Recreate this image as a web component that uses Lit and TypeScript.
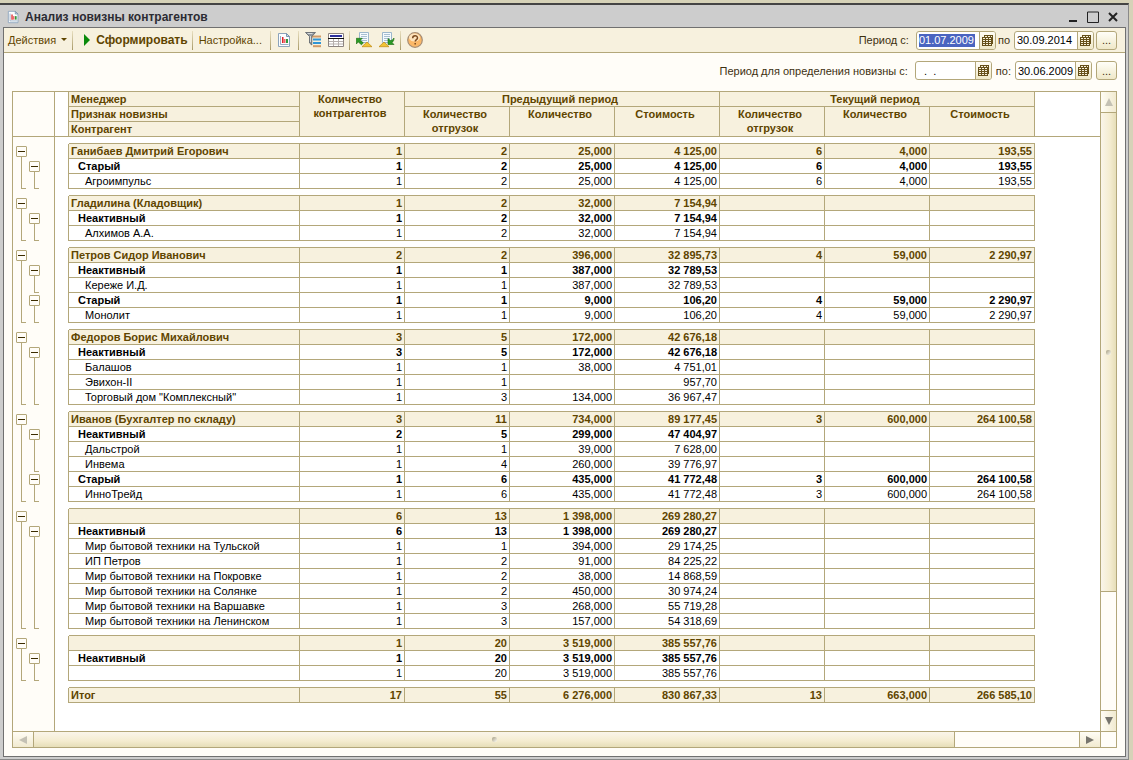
import { LitElement, html, css, svg, nothing } from "lit";
import { customElement, property } from "lit/decorators.js";

type Level = 0 | 1 | 2;
interface Row { level: Level; name: string; values: string[]; }

const r = (level: Level, name: string, line: string): Row => ({
  level, name, values: Array.from({ length: 7 }, (_, i) => line.split("|")[i] ?? ""),
});

const GROUPS: Row[][] = [
  [
    r(0, "Ганибаев Дмитрий Егорович", "1|2|25,000|4 125,00|6|4,000|193,55"),
    r(1, "Старый", "1|2|25,000|4 125,00|6|4,000|193,55"),
    r(2, "Агроимпульс", "1|2|25,000|4 125,00|6|4,000|193,55"),
  ],
  [
    r(0, "Гладилина (Кладовщик)", "1|2|32,000|7 154,94"),
    r(1, "Неактивный", "1|2|32,000|7 154,94"),
    r(2, "Алхимов А.А.", "1|2|32,000|7 154,94"),
  ],
  [
    r(0, "Петров Сидор Иванович", "2|2|396,000|32 895,73|4|59,000|2 290,97"),
    r(1, "Неактивный", "1|1|387,000|32 789,53"),
    r(2, "Кереже И.Д.", "1|1|387,000|32 789,53"),
    r(1, "Старый", "1|1|9,000|106,20|4|59,000|2 290,97"),
    r(2, "Монолит", "1|1|9,000|106,20|4|59,000|2 290,97"),
  ],
  [
    r(0, "Федоров Борис Михайлович", "3|5|172,000|42 676,18"),
    r(1, "Неактивный", "3|5|172,000|42 676,18"),
    r(2, "Балашов", "1|1|38,000|4 751,01"),
    r(2, "Эвихон-II", "1|1||957,70"),
    r(2, 'Торговый дом "Комплексный"', "1|3|134,000|36 967,47"),
  ],
  [
    r(0, "Иванов (Бухгалтер по складу)", "3|11|734,000|89 177,45|3|600,000|264 100,58"),
    r(1, "Неактивный", "2|5|299,000|47 404,97"),
    r(2, "Дальстрой", "1|1|39,000|7 628,00"),
    r(2, "Инвема", "1|4|260,000|39 776,97"),
    r(1, "Старый", "1|6|435,000|41 772,48|3|600,000|264 100,58"),
    r(2, "ИнноТрейд", "1|6|435,000|41 772,48|3|600,000|264 100,58"),
  ],
  [
    r(0, "", "6|13|1 398,000|269 280,27"),
    r(1, "Неактивный", "6|13|1 398,000|269 280,27"),
    r(2, "Мир бытовой техники на Тульской", "1|1|394,000|29 174,25"),
    r(2, "ИП Петров", "1|2|91,000|84 225,22"),
    r(2, "Мир бытовой техники на Покровке", "1|2|38,000|14 868,59"),
    r(2, "Мир бытовой техники на Солянке", "1|2|450,000|30 974,24"),
    r(2, "Мир бытовой техники на Варшавке", "1|3|268,000|55 719,28"),
    r(2, "Мир бытовой техники на Ленинском", "1|3|157,000|54 318,69"),
  ],
  [
    r(0, "", "1|20|3 519,000|385 557,76"),
    r(1, "Неактивный", "1|20|3 519,000|385 557,76"),
    r(2, "", "1|20|3 519,000|385 557,76"),
  ],
  [r(0, "Итог", "17|55|6 276,000|830 867,33|13|663,000|266 585,10")],
];

const chart = svg`
  <path d="M1.500 1.500h8l3 3v10h-11z" fill="#fbfdff" stroke="#8ba3bb"/>
  <path d="M9.500 1.500v3h3z" fill="#cfdeec" stroke="#7b93ae"/>
  <path d="M3.500 4v8.500h8" fill="none" stroke="#9aaec4"/>
  <path d="M5 5h1.500v6H5z" fill="#e0252b"/><path d="M6.500 7h2v4h-2z" fill="#f0686c"/>
  <path d="M9 7h2v4H9z" fill="#2f9a3c"/>`;
const page = svg`
  <path d="M3.500 .5h9v10h-9z" fill="#f5fafd" stroke="#9db7cc"/>
  <path d="M5 2.500h6M5 4.500h6M5 6.500h6M5 8.500h6" stroke="#a9bfd2"/>`;

const ICONS: Record<string, unknown> = {
  chart,
  filter: svg`
    <path d="M7 4.500h9" stroke="#d09a68" stroke-width="2"/>
    <path d="M8 7.500h8M8 11h8" stroke="#2f95d6" stroke-width="2"/>
    <path d="M8 14.200h8" stroke="#d09a68" stroke-width="2"/>
    <path d="M.5 .5h10L6.800 4.500v8.500L4.500 11V4.500z" fill="#8e959b" stroke="#5a6168" stroke-width=".8"/>
    <path d="M2.500 1.500h5M5.500 4v6" stroke="#d6dadd"/>`,
  grid: svg`
    <path d="M.5 1.500h15v13H.5z" fill="#fff" stroke="#8c8480"/>
    <path d="M2 3h12v2H2z" fill="#2a2f9c"/>
    <path d="M0 6.500h16" stroke="#111"/>
    <path d="M1 9.500h14M1 12h14M5.500 7v7M10.500 7v7" stroke="#b5afad"/>`,
  restore: svg`${page}
    <path d="M6 14.700l5-4.700 5 4.700z" fill="#f2c335" stroke="#c08a12" stroke-width=".7"/>
    <path d="M.3 6.300h6l-2 2 3 2.500-1.800 2L2.300 10 .3 12z" fill="#2c9a26" stroke="#17680f" stroke-width=".6"/>`,
  save: svg`${page}
    <path d="M0 14.700l5-4.700 5 4.700z" fill="#f2c335" stroke="#c08a12" stroke-width=".7"/>
    <path d="M9 6.500v6h6l-2-2c1.500-1 2-2.500 2-4.500-.8 1.500-2 2.200-3.500 2.500z" fill="#2c9a26" stroke="#17680f" stroke-width=".6"/>`,
  help: svg`
    <circle cx="8" cy="8" r="7.300" fill="#fbb868" stroke="#a58d75" stroke-width="1.200"/>
    <ellipse cx="7.500" cy="5.500" rx="5.500" ry="4" fill="#fde3bd"/>
    <path d="M5.700 6.200c0-3.200 4.800-3.200 4.800-.3 0 1.800-2.300 1.700-2.300 3.600M8.200 11v1.600" fill="none" stroke="#7a4a20" stroke-width="1.500"/>`,
};

const icon = (name: string) =>
  html`<svg class="icon" viewBox="0 0 16 16" aria-hidden="true">${ICONS[name]}</svg>`;

const shared = css`
  * { box-sizing: border-box; }
  button { font: inherit; color: inherit; margin: 0; padding: 0; border: 0; background: none; }
  .icon { display: block; width: 16px; height: 16px; flex: none; }
`;

@customElement("date-field")
class DateField extends LitElement {
  @property() label = "";
  @property() value = "";
  @property({ type: Boolean }) selected = false;
  @property({ type: Boolean }) wide = false;

  static styles = [shared, css`
    :host { display: flex; align-items: center; }
    label { white-space: pre; padding-right: 4px; }
    .box {
      display: flex; width: 77px; height: 19px; border: 1px solid #b3a77a;
      border-radius: 3px; background: #fff; overflow: hidden;
    }
    .wide { width: 80px; }
    input {
      flex: 1; min-width: 0; height: 13px; margin: 2px 0 0 2px; padding: 0;
      border: 0; outline: 0; background: none; font: inherit; color: #000;
    }
    .marked { flex: none; width: 56px; background: #4a64c0; color: #fff; }
    button {
      display: grid; place-items: center; width: 16px; margin-left: auto;
      border-left: 1px solid #b3a77a; background: linear-gradient(#fffdf5, #efe8c8);
    }
    .pages { display: block; width: 11px; height: 11px; }
  `];

  render() {
    return html`
      <label for="date">${this.label}</label>
      <div class="box ${this.wide ? "wide" : ""}">
        <input id="date" class=${this.selected ? "marked" : ""} .value=${this.value} />
        <button aria-label="Календарь">
          <svg class="pages" viewBox="0 0 11 11" shape-rendering="crispEdges" aria-hidden="true">
            <path d="M2 0h9v9h-1v2H0V2h2z" fill="#66501a" />
            <path d="M3 1h2v1H3zM6 1h2v1H6zM9 1h1v1H9zM1 3h2v1H1zM4 3h2v1H4zM7 3h2v1H7zM1 5h2v1H1zM4 5h2v1H4zM7 5h2v1H7zM1 7h2v1H1zM4 7h2v1H4zM7 7h2v1H7zM1 9h2v1H1zM4 9h2v1H4zM7 9h2v1H7z" fill="#f7f1dc" />
          </svg>
        </button>
      </div>`;
  }
}

@customElement("outline-tree")
class OutlineTree extends LitElement {
  static styles = [shared, css`
    :host { display: flex; flex-direction: column; gap: 6px; padding: 6px 0 0 3px; }
    .group { display: flex; gap: 2px; }
    .subs { display: flex; flex-direction: column; padding-top: 15px; }
    .node {
      display: grid; grid-template-rows: 11px 1fr; width: 11px; padding-top: 3px;
      height: calc(var(--n) * 15px + 1px);
    }
    .subs .node { margin-bottom: -1px; }
    button {
      width: 11px; height: 11px; border: 1px solid #b3a77a; border-radius: 1px;
      background: #fffdf8; display: grid; place-items: center;
    }
    .minus { width: 7px; height: 1px; background: #3c2c00; }
    .stem { margin-left: 5px; width: 5px; border: solid #b3a77a; border-width: 0 0 1px 1px; }
  `];

  private node(rows: number, name: string) {
    return html`<div class="node" style="--n:${rows}">
      <button aria-label="Свернуть ${name}"><span class="minus"></span></button>
      <span class="stem"></span>
    </div>`;
  }

  render() {
    return GROUPS.filter((g) => g.length > 1).map((g) => {
      const starts = g.map((row, i) => (row.level === 1 ? i : -1)).filter((i) => i > 0);
      return html`<div class="group">
        ${this.node(g.length, g[0].name)}
        <div class="subs">
          ${starts.map((s, i) => this.node((starts[i + 1] ?? g.length) - s, g[s].name))}
        </div>
      </div>`;
    });
  }
}

@customElement("report-table")
class ReportTable extends LitElement {
  static styles = [shared, css`
    :host { display: block; }
    table { width: 100%; table-layout: fixed; border-collapse: separate; border-spacing: 0; }
    .edge { width: 14px; }
    .name { width: 231px; }
    .num { width: 105px; }
    th, td {
      height: 15px; padding: 0 2px; line-height: 14px; font-weight: 400;
      border: solid #b3a77a; border-width: 0 1px 1px 0; white-space: nowrap; overflow: hidden;
      vertical-align: top; color: #000;
    }
    th { text-align: left; }
    td { text-align: right; }
    thead th {
      background: #f7f1de; color: #5f4500; font-weight: 700; text-align: center;
      white-space: normal; padding-right: 6px;
    }
    thead .left { text-align: left; }
    thead .blank { background: #fff; padding: 0; border-right-width: 0; }
    thead .first, tbody .first { border-right-width: 1px; }
    tbody .side { border-bottom-width: 0; background: #fff; }
    tbody .tail { border-width: 0; }
    .l0 > .cell { background: #f7f1de; color: #5f4500; font-weight: 700; }
    .l1 > .cell { font-weight: 700; }
    .l1 > th { padding-left: 9px; }
    .l2 > th { padding-left: 16px; }
    .gap td { height: 7px; line-height: 6px; border-right-width: 0; padding: 0; }
    .gap .side { border-bottom-width: 0; }
  `];

  render() {
    return html`<table>
      <colgroup>
        <col class="edge" /><col class="name" />
        ${Array.from({ length: 7 }, () => html`<col class="num" />`)}
        <col />
      </colgroup>
      <thead>
        <tr>
          <th class="blank first" rowspan="3"></th>
          <th class="left">Менеджер</th>
          <th rowspan="3">Количество контрагентов</th>
          <th colspan="3">Предыдущий период</th>
          <th colspan="3">Текущий период</th>
          <th class="blank" rowspan="3"></th>
        </tr>
        <tr>
          <th class="left">Признак новизны</th>
          ${[0, 1].map(() => html`
            <th rowspan="2">Количество отгрузок</th>
            <th rowspan="2">Количество</th>
            <th rowspan="2">Стоимость</th>`)}
        </tr>
        <tr><th class="left">Контрагент</th></tr>
      </thead>
      ${GROUPS.map((g) => html`<tbody>
        <tr class="gap"><td class="side"></td><td colspan="8"></td><td class="side"></td></tr>
        ${g.map((row) => html`<tr class="l${row.level}">
          <td class="side first"></td>
          <th class="cell" scope="row">${row.name}</th>
          ${row.values.map((v) => html`<td class="cell">${v || nothing}</td>`)}
          <td class="side tail"></td>
        </tr>`)}
      </tbody>`)}
    </table>`;
  }
}

@customElement("app-root")
class AppRoot extends LitElement {
  static styles = [shared, css`
    :host {
      box-sizing: border-box; display: flex; flex-direction: column; height: 100vh; overflow: hidden;
      padding: 3px 4px 0 0; background: #d6d2b8;
      font: 11px/14px "Liberation Sans", Arial, sans-serif; color: #3d3010;
    }
    .window {
      flex: 1; min-height: 0; display: flex; flex-direction: column; background: #cdcdcd;
      border-top: 2px solid #444; border-right: 1px solid #8a8a8a; border-bottom: 1px solid #8a8a8a;
      padding: 0 2px 2px 3px;
    }
    .title { display: flex; align-items: center; height: 22px; padding: 2px 3px 0 4px; color: #2b2b33; }
    .title .icon { width: 14px; height: 14px; }
    h1 { flex: 1; margin: 0 0 0 4px; font-size: 12px; line-height: 16px; }
    .title button { width: 20px; height: 16px; display: grid; place-items: center; }
    .client {
      flex: 1; min-height: 0; display: flex; flex-direction: column; background: #fffdf8;
      border: 1px solid #707070;
    }
    .bar {
      display: flex; flex: none; align-items: center; height: 25px; padding: 0 8px 0 4px;
      background: #f7f1de; border-bottom: 1px solid #b3a77a; color: #5f4500;
    }
    .bar button, .more { white-space: nowrap; }
    .sep { width: 1px; height: 19px; background: linear-gradient(#e8dfc0, #a89a68); }
    .actions, .run { display: flex; align-items: center; gap: 5px; }
    .actions { margin-right: 5px; }
    .run { margin: 0 4px 0 10px; font-weight: 700; font-size: 12px; }
    .setup { margin: 0 8px 0 6px; }
    .tools { display: flex; align-items: center; gap: 7px; margin: 0 5px 0 6px; }
    .period { display: flex; align-items: center; gap: 4px; color: #3d3010; }
    .bar .period { margin-left: auto; gap: 2px; }
    .row { display: flex; flex: none; justify-content: flex-end; align-items: flex-start; height: 38px; padding: 8px 8px 0 0; }
    .more {
      width: 21px; height: 19px; border: 1px solid #b3a77a; border-radius: 3px;
      background: linear-gradient(#fffef8, #efe8c8);
    }
    .sheet {
      flex: 1; min-height: 0; margin: 0 8px 8px; border: 1px solid #b3a77a; background: #fff;
      display: grid; grid-template: minmax(0, 1fr) 16px / 41px minmax(0, 1fr) 16px;
    }
    .outline { background: #fffdf8; overflow: hidden; }
    .corner { height: 45px; border-bottom: 1px solid #b3a77a; }
    .content { border-left: 1px solid #b3a77a; overflow: hidden; }
    .vscroll, .hscroll { display: flex; background: #fffdf8; }
    .vscroll { flex-direction: column; border-left: 1px solid #b3a77a; }
    .hscroll { grid-column: 1 / 3; border-top: 1px solid #b3a77a; }
    .foot { border: solid #b3a77a; border-width: 1px 0 0 1px; background: #fffdf8; }
    .vscroll > *, .hscroll > * { display: grid; place-items: center; }
    .vscroll button { height: 21px; background: linear-gradient(90deg, #fffdf5, #f1ead0); }
    .hscroll button { width: 21px; background: linear-gradient(#fffdf5, #f1ead0); }
    .vscroll .up { height: 20px; }
    .hscroll .back { width: 20px; }
    .vthumb { flex: 480; background: linear-gradient(90deg, #faf5ea, #f4ecd0 60%, #e6deb8); border: solid #b3a77a; border-width: 1px 0; }
    .vrest { flex: 118; }
    .hthumb { flex: 922; background: linear-gradient(#faf5ea, #f4ecd0 60%, #e6deb8); border: solid #b3a77a; border-width: 0 1px; }
    .hrest { flex: 124; }
    .down { border-top: 1px solid #b3a77a; }
    .hscroll .next { border-left: 1px solid #b3a77a; }
    .grip { width: 5px; height: 5px; border-radius: 2px; background: linear-gradient(135deg, #a39c82, #fffdf5); }
    .arrow { display: block; width: 8px; height: 8px; fill: #77756d; }
    .dim { fill: #c4c1b4; }
  `];

  private arrow(d: string, dim = false) {
    return html`<svg class="arrow ${dim ? "dim" : ""}" viewBox="0 0 8 8" aria-hidden="true"><path d=${d} /></svg>`;
  }

  render() {
    return html`
      <div class="window">
        <header class="title">
          ${icon("chart")}
          <h1>Анализ новизны контрагентов</h1>
          <button aria-label="Свернуть"><svg width="12" height="12"><path d="M2 10h8" stroke="#222" stroke-width="2" /></svg></button>
          <button aria-label="Развернуть"><svg width="12" height="12"><path d="M.5 1h11M.5 1v10.500h11V1" fill="none" stroke="#222" /></svg></button>
          <button aria-label="Закрыть"><svg width="12" height="12"><path d="M2 2l8 8M10 2l-8 8" stroke="#222" stroke-width="2" /></svg></button>
        </header>
        <main class="client">
          <div class="bar" role="toolbar">
            <button class="actions">Действия
              <svg width="6" height="4" aria-hidden="true"><path d="M0 0h6L3 3z" fill="#5f4500" /></svg>
            </button>
            <span class="sep"></span>
            <button class="run">
              <svg width="8" height="12" aria-hidden="true"><path d="M1 0l6 6-6 6z" fill="#0a8a0a" /></svg>
              Сформировать
            </button>
            <span class="sep"></span>
            <button class="setup">Настройка...</button>
            <span class="sep"></span>
            <div class="tools"><button aria-label="Диаграмма">${icon("chart")}</button></div>
            <span class="sep"></span>
            <div class="tools">
              <button aria-label="Отбор">${icon("filter")}</button>
              <button aria-label="Таблица">${icon("grid")}</button>
            </div>
            <span class="sep"></span>
            <div class="tools">
              <button aria-label="Восстановить">${icon("restore")}</button>
              <button aria-label="Сохранить">${icon("save")}</button>
            </div>
            <span class="sep"></span>
            <div class="tools"><button aria-label="Справка">${icon("help")}</button></div>
            <div class="period">
              <date-field label="Период с: " value="01.07.2009" selected wide></date-field>
              <date-field label="по" value="30.09.2014" wide></date-field>
              <button class="more" aria-label="Выбрать период">...</button>
            </div>
          </div>
          <div class="row">
            <div class="period">
              <date-field label="Период для определения новизны с: " value="  .  ."></date-field>
              <date-field label="по:" value="30.06.2009"></date-field>
              <button class="more" aria-label="Выбрать период новизны">...</button>
            </div>
          </div>
          <div class="sheet">
            <div class="outline"><div class="corner"></div><outline-tree></outline-tree></div>
            <div class="content"><report-table></report-table></div>
            <div class="vscroll">
              <button class="up" aria-label="Вверх">${this.arrow("M0 8L4 0l4 8z", true)}</button>
              <div class="vthumb"><span class="grip"></span></div>
              <div class="vrest"></div>
              <button class="down" aria-label="Вниз">${this.arrow("M0 0h8L4 8z")}</button>
            </div>
            <div class="hscroll">
              <button class="back" aria-label="Влево">${this.arrow("M8 0v8L0 4z", true)}</button>
              <div class="hthumb"><span class="grip"></span></div>
              <div class="hrest"></div>
              <button class="next" aria-label="Вправо">${this.arrow("M0 0l8 4-8 4z")}</button>
            </div>
            <div class="foot"></div>
          </div>
        </main>
      </div>`;
  }
}
